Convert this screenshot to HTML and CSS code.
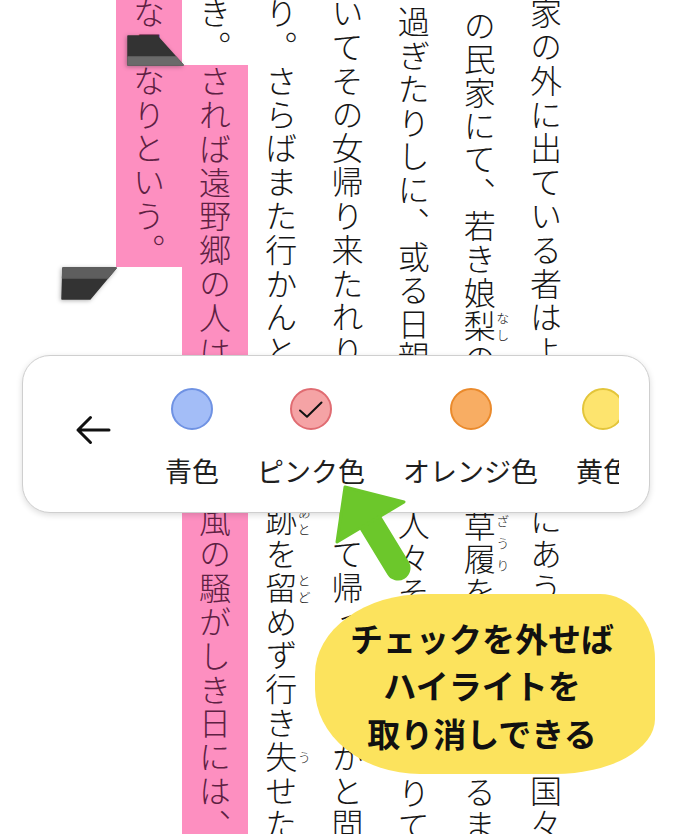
FILE: index.html
```html
<!DOCTYPE html>
<html lang="ja">
<head>
<meta charset="utf-8">
<title>ハイライト</title>
<link rel="stylesheet" href="styles.css">
</head>
<body>
<main class="page">
  <div class="col">
    <div class="seg">家の外に出ている者はよく神隠しにあうことは他の国々</div>
  </div>
  <div class="col col-b">
    <div class="seg">の民家にて、若き娘<ruby>梨<rt>なし</rt></ruby>の樹の下に<ruby>草履<rt>ざうり</rt></ruby>を脱ぎ置きたるま</div>
  </div>
  <div class="col col-c">
    <div class="seg">過ぎたりしに、或る日親類知音の人々その家に集まりて</div>
  </div>
  <div class="col">
    <div class="seg">いてその女帰り来たれり。いかにして帰って来たかと問</div>
  </div>
  <div class="col">
    <div class="seg">り。さらばまた行かんとて、再び<ruby>跡<rt>あと</rt></ruby>を<ruby>留<rt>とど</rt></ruby>めず行き<ruby>失<rt>う</rt></ruby>せた</div>
  </div>
  <div class="col">
    <div class="seg">き。</div>
    <div class="seg hl">されば遠野郷の人は、今でも風の騒がしき日には、</div>
  </div>
  <div class="col">
    <div class="seg hl">な日なりという。</div>
  </div>
</main>

<svg class="handle handle-start" width="62" height="36" viewBox="0 0 62 36" aria-hidden="true">
  <polygon points="4,4 33,4 59,33 4,33" fill="#333333" stroke="#333333" stroke-width="1.5" stroke-linejoin="round"/>
  <polygon points="4,25 51.8,25 59,33 4,33" fill="#6a6a6a" stroke="#6a6a6a" stroke-width="1.5" stroke-linejoin="round"/>
</svg>
<svg class="handle handle-end" width="62" height="40" viewBox="0 0 62 40" aria-hidden="true">
  <polygon points="5,4 58,4 32,35 4,35" fill="#333333" stroke="#333333" stroke-width="1.5" stroke-linejoin="round"/>
  <polygon points="5,4 58,4 49.6,14 4.5,14" fill="#5e5e5e" stroke="#5e5e5e" stroke-width="1.5" stroke-linejoin="round"/>
</svg>

<div class="panel">
  <button class="back" type="button" aria-label="戻る">
    <svg width="36" height="30" viewBox="0 0 36 30">
      <path d="M3 15 H34 M15.5 2.5 L3 15 L15.5 27.5" fill="none" stroke="#111" stroke-width="3" stroke-linecap="round" stroke-linejoin="round"/>
    </svg>
  </button>
  <div class="swatches">
    <div class="swatch-list">
      <div class="swatch"><span class="dot dot-blue"></span><span class="label">青色</span></div>
      <div class="swatch"><span class="dot dot-pink">
        <svg width="26" height="19" viewBox="0 0 26 19"><polyline points="2,10.5 9,16.8 23.5,2.5" fill="none" stroke="#111" stroke-width="2" stroke-linecap="round" stroke-linejoin="round"/></svg>
      </span><span class="label">ピンク色</span></div>
      <div class="swatch"><span class="dot dot-orange"></span><span class="label">オレンジ色</span></div>
      <div class="swatch"><span class="dot dot-yellow"></span><span class="label">黄色</span></div>
    </div>
  </div>
</div>

<svg class="pointer" width="100" height="120" viewBox="0 0 100 120" aria-hidden="true">
  <line x1="45" y1="47" x2="73" y2="93" stroke="#6cc72b" stroke-width="25" stroke-linecap="round"/>
  <polygon points="20,12 79,27 12,67" fill="#6cc72b" stroke="#6cc72b" stroke-width="3" stroke-linejoin="round"/>
</svg>

<div class="callout">
  <p class="callout-text">チェックを外せば<br>ハイライトを<br>取り消しできる</p>
</div>
</body>
</html>
```

FILE: styles.css
```css
html, body {
  margin: 0;
  padding: 0;
  background: #ffffff;
}

body {
  width: 700px;
  height: 834px;
  overflow: hidden;
  position: relative;
  font-family: "Noto Sans CJK JP", "Noto Sans", sans-serif;
}

/* ---------- vertical reading text ---------- */
.page {
  display: flex;
  flex-direction: row-reverse;
  justify-content: flex-start;
  align-items: flex-start;
  padding-right: 121px;
  height: 834px;
  box-sizing: border-box;
}

.col {
  flex: 0 0 66.2px;
  width: 66.2px;
  margin-top: -3px;
  letter-spacing: 1.8px;
}

.col-b {
  margin-top: 10px;
  letter-spacing: 1.3px;
}

.col-c {
  margin-top: 6px;
  letter-spacing: 1.5px;
}

.seg {
  writing-mode: vertical-rl;
  white-space: nowrap;
  font-size: 32px;
  font-weight: 300;
  line-height: 66.2px;
  color: #161616;
}

.seg.hl {
  background: #fd8fc0;
  color: #5e2143;
}

.seg rt {
  font-size: 13px;
  letter-spacing: 0;
  color: #222;
}

/* ---------- selection handles ---------- */
.handle {
  position: absolute;
  filter: drop-shadow(-1px 1px 2px rgba(0, 0, 0, 0.3));
}

.handle-start {
  left: 124px;
  top: 32px;
}

.handle-end {
  left: 58px;
  top: 264px;
}

/* ---------- colour panel ---------- */
.panel {
  position: absolute;
  left: 22px;
  top: 355px;
  width: 628px;
  height: 158px;
  box-sizing: border-box;
  background: #ffffff;
  border: 1px solid #cfcfcf;
  border-radius: 28px;
  box-shadow: 0 2px 6px rgba(0, 0, 0, 0.14);
  display: flex;
  align-items: flex-start;
  padding: 0 30px 0 46px;
}

.back {
  flex: none;
  width: 48px;
  height: 48px;
  margin-top: 50px;
  padding: 0;
  border: none;
  background: none;
  display: flex;
  align-items: center;
  justify-content: center;
}

.swatches {
  flex: 1;
  margin-left: 23px;
  overflow: hidden;
  padding-top: 32px;
  height: 100%;
  box-sizing: border-box;
}

.swatch-list {
  display: flex;
  gap: 38px;
  padding-left: 25px;
}

.swatch {
  flex: none;
  display: flex;
  flex-direction: column;
  align-items: center;
}

.dot {
  width: 42px;
  height: 42px;
  box-sizing: border-box;
  border-radius: 50%;
  border: 2px solid;
  display: flex;
  align-items: center;
  justify-content: center;
}

.dot-blue   { background: #a3bdf7; border-color: #6f92e3; }
.dot-pink   { background: #f5a3a5; border-color: #e06c72; }
.dot-orange { background: #f8ad63; border-color: #ea8a2c; }
.dot-yellow { background: #fde46e; border-color: #e3c53a; }

.label {
  margin-top: 25px;
  font-size: 27px;
  line-height: 32px;
  color: #1e1e1e;
  white-space: nowrap;
}

.swatch-wide .label {
  letter-spacing: 1px;
}

/* ---------- annotation ---------- */
.pointer {
  position: absolute;
  left: 325px;
  top: 475px;
}

.callout {
  position: absolute;
  left: 315px;
  top: 594px;
  width: 340px;
  height: 180px;
  box-sizing: border-box;
  background: #fce35d;
  border-radius: 110px 55px 100px 105px / 80px 65px 55px 85px;
  display: flex;
  align-items: center;
  justify-content: center;
  padding: 4px 6px 0 0;
}

.callout-text {
  margin: 0;
  text-align: center;
  font-size: 33px;
  font-weight: 700;
  line-height: 47.5px;
  color: #111111;
}
```
